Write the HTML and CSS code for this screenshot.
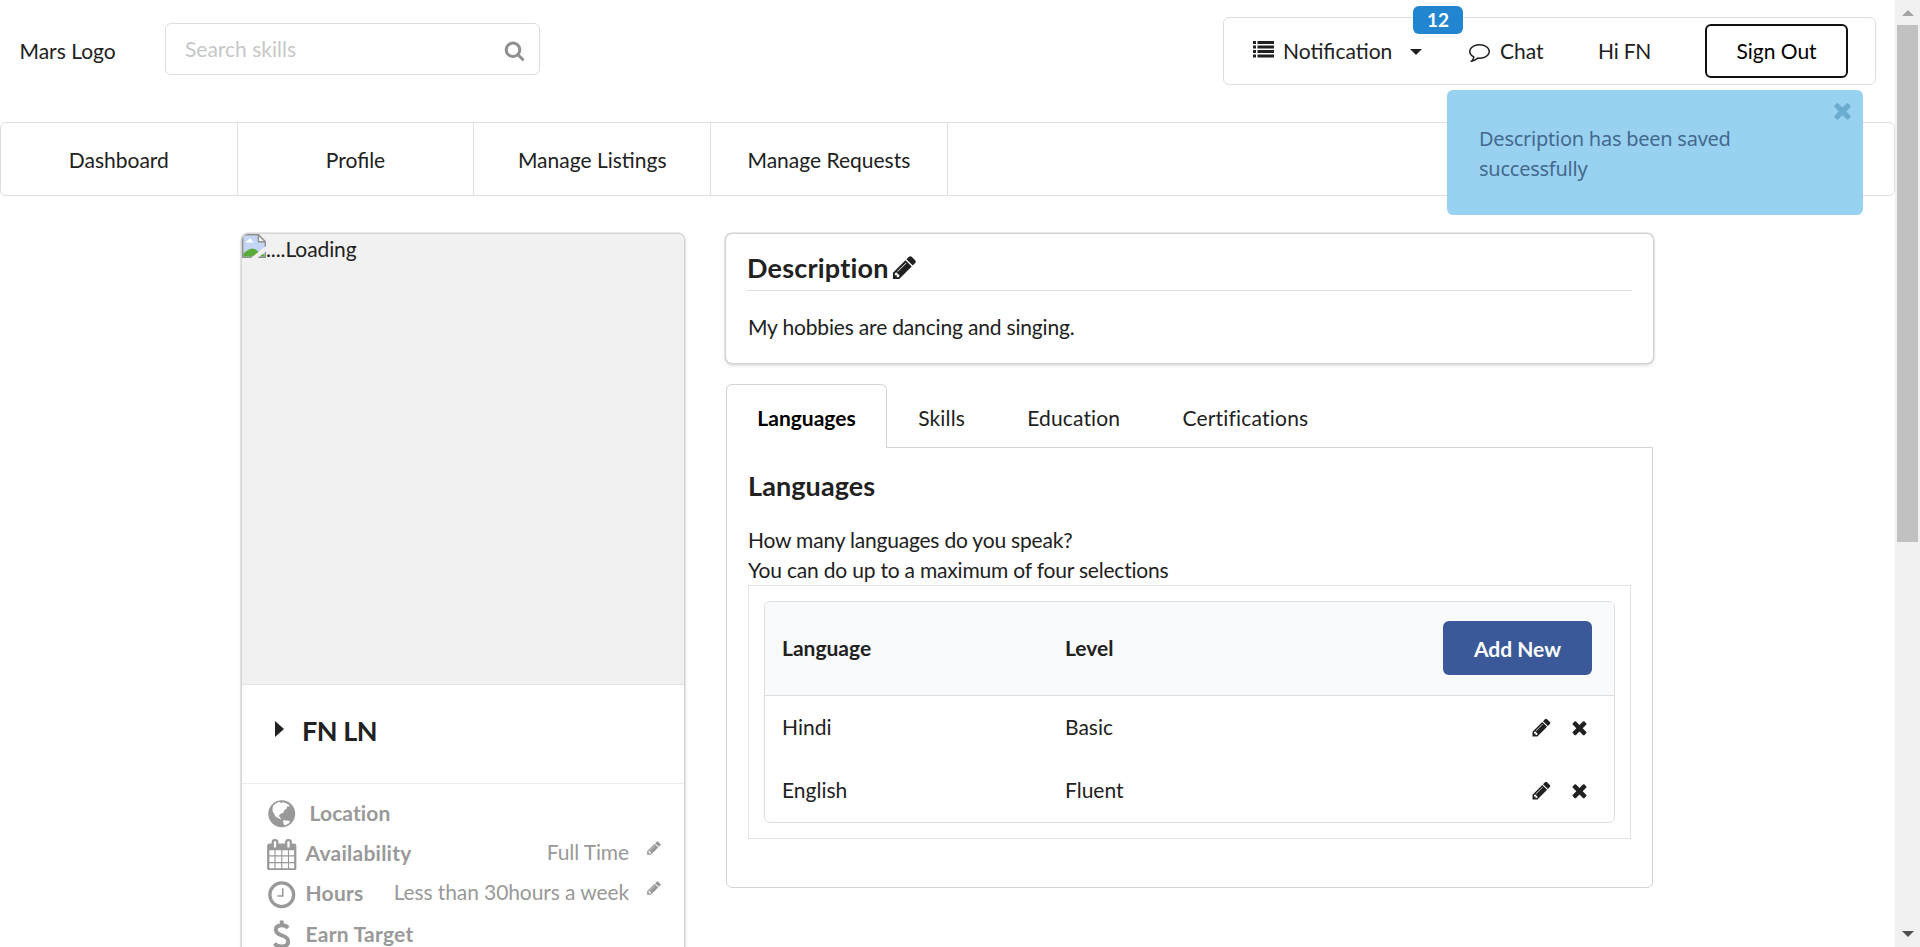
FILE: index.html
```html
<!DOCTYPE html>
<html lang="en">
<head>
<meta charset="utf-8">
<title>Profile</title>
<link rel="stylesheet" href="styles.css">
</head>
<body>
<svg class="defs" aria-hidden="true">
  <symbol id="pencil" viewBox="0 0 1792 1792"><path d="M491 1536l91-91-235-235-91 91v107h128v128h107zm523-928q0-22-22-22-10 0-17 7l-542 542q-7 7-7 17 0 22 22 22 10 0 17-7l542-542q7-7 7-17zm-54-192l416 416-832 832h-416v-416zm683 96q0 53-37 90l-166 166-416-416 166-165q36-38 90-38 53 0 91 38l235 234q37 39 37 91z"/></symbol>
  <symbol id="times" viewBox="0 0 1792 1792"><path d="M1490 1322q0 40-28 68l-136 136q-28 28-68 28t-68-28l-294-294-294 294q-28 28-68 28t-68-28l-136-136q-28-28-28-68t28-68l294-294-294-294q-28-28-28-68t28-68l136-136q28-28 68-28t68 28l294 294 294-294q28-28 68-28t68 28l136 136q28 28 28 68t-28 68l-294 294 294 294q28 28 28 68z"/></symbol>
</svg>
<div class="page">
  <header class="top">
    <div class="logo">Mars Logo</div>
    <div class="search">
      <span>Search skills</span>
      <svg class="ic21" viewBox="0 0 1792 1792"><path d="M1216 832q0-185-131.5-316.5t-316.5-131.5-316.5 131.5-131.5 316.5 131.5 316.5 316.5 131.5 316.5-131.5 131.5-316.5zm512 832q0 52-38 90t-90 38q-54 0-90-38l-343-342q-179 124-399 124-143 0-273.5-55.5t-225-150-150-225-55.5-273.5 55.5-273.5 150-225 225-150 273.5-55.5 273.5 55.5 225 150 150 225 55.5 273.5q0 220-124 399l343 343q37 37 37 90z"/></svg>
    </div>
    <div class="menu">
      <div class="notif">
        <svg class="ic21 list" viewBox="0 0 21 21"><path d="M0 1h3v3H0zM4.500 1H21v3H4.500zM0 5.500h3v3H0zM4.500 5.500H21v3H4.500zM0 10h3v3H0zM4.500 10H21v3H4.500zM0 14.500h3v3H0zM4.500 14.500H21v3H4.500z"/></svg>
        <span>Notification</span>
        <svg class="caret" viewBox="0 0 12 6"><path d="M0 0h12L6 6z"/></svg>
        <b class="badge">12</b>
      </div>
      <div class="chat">
        <svg class="ic21" viewBox="0 0 1792 1792"><path d="M896 384q-204 0-381.500 69.500t-282 187.500-104.500 255q0 112 71.500 213.500t201.500 175.500l87 50-27 96q-24 91-70 172 152-63 275-171l43-38 57 6q69 8 130 8 204 0 381.500-69.500t282-187.500 104.500-255-104.500-255-282-187.500-381.500-69.500zm896 512q0 174-120 321.500t-326 233-450 85.500q-70 0-145-8-198 175-460 242-49 14-114 22h-5q-15 0-27-10.500t-16-27.500v-1q-3-4-.5-12t2-10 4.500-9.500l6-9 7-8.500 8-9q7-8 31-34.500t34.500-38 31-39.500 32.500-51 27-59 26-76q-157-89-247.500-220t-90.500-281q0-174 120-321.500t326-233 450-85.500 450 85.500 326 233 120 321.500z"/></svg>
        <span>Chat</span>
      </div>
      <div class="hi">Hi FN</div>
      <div class="signout">Sign Out</div>
    </div>
  </header>
  <nav class="nav">
    <a>Dashboard</a><a>Profile</a><a>Manage Listings</a><a>Manage Requests</a>
  </nav>
  <main class="main">
    <aside class="card profile">
      <div class="photo">
        <svg class="broken" viewBox="0 0 24 24">
          <path d="M.7.7h15.600l7 7v15.600H.7z" fill="#c5d6f5" stroke="#909090" stroke-width="1.400"/>
          <path d="M16.300.7v7h7z" fill="#fff" stroke="#909090" stroke-width="1.400"/>
          <path d="M4 8.500q0-2 2-2 1-2.500 3-1.500 1 1 1 2 1.500 0 1.500 1.500z" fill="#fff"/>
          <path d="M1.400 22.600v-3Q6 15 10.500 14.500q3.500.5 5.500 3l6.600 3.500v1.600z" fill="#5aac3a"/>
          <path d="M9 24L24 12v5.500L15.500 24z" fill="#f1f1f1"/>
        </svg><span>....Loading</span>
      </div>
      <div class="name"><svg class="tri" viewBox="0 0 9 16"><path d="M0 0l9 8-9 8z"/></svg><b>FN LN</b></div>
      <div class="facts">
        <div class="fact loc"><svg class="ic31" viewBox="0 0 32 32"><circle cx="16" cy="16" r="13.700"/><path d="M7 8q3-3.500 7-4.300l1 1.300 3-.8 5 2.300 1 2.500-2.500-.5-.5 2.500-2.500 1.500-1 2.500-2.500 1-2 2 1.500 2 1 2.200-3.500-2.200-2-.8-2-3.700-1.500-2.500z" fill="#fff"/><path d="M17.500 22.300l2.500.5 4.500.5-1.500 2.500-4 2.200-1.500-2.500z" fill="#fff"/></svg><b>Location</b></div>
        <div class="fact"><svg class="ic31 cal" viewBox="0 0 1792 1792"><path d="M192 1664h288v-288h-288v288zm352 0h320v-288h-320v288zm-352-352h288v-320h-288v320zm352 0h320v-320h-320v320zm-352-384h288v-288h-288v288zm736 736h320v-288h-320v288zm-384-736h320v-288h-320v288zm768 736h288v-288h-288v288zm-384-352h320v-320h-320v320zm-352-864v-288q0-13-9.500-22.500t-22.500-9.500h-64q-13 0-22.500 9.500t-9.500 22.500v288q0 13 9.500 22.500t22.500 9.500h64q13 0 22.500-9.500t9.500-22.500zm736 864h288v-320h-288v320zm-384-384h320v-288h-320v288zm384 0h288v-288h-288v288zm32-480v-288q0-13-9.500-22.500t-22.500-9.500h-64q-13 0-22.500 9.500t-9.500 22.500v288q0 13 9.500 22.500t22.500 9.500h64q13 0 22.500-9.500t9.500-22.500zm384-64v1280q0 52-38 90t-90 38h-1408q-52 0-90-38t-38-90v-1280q0-52 38-90t90-38h128v-96q0-66 47-113t113-47h64q66 0 113 47t47 113v96h384v-96q0-66 47-113t113-47h64q66 0 113 47t47 113v96h128q52 0 90 38t38 90z"/></svg><b>Availability</b><span>Full Time</span><svg class="ic16"><use href="#pencil"/></svg></div>
        <div class="fact"><svg class="ic31" viewBox="0 0 32 32"><circle cx="16" cy="16" r="12.100" fill="none" stroke="#999" stroke-width="3.400"/><path d="M16.200 9.500h1.600v8.500H11.500v-1.600h4.700z"/></svg><b>Hours</b><span>Less than 30hours a week</span><svg class="ic16"><use href="#pencil"/></svg></div>
        <div class="fact"><svg class="ic31" viewBox="0 0 32 32"><path d="M16 .5v4M16 27.500v4M22.500 8Q20 5.300 16 5.300q-6 0-6 4.700 0 3.800 6 5.700 6.500 2 6.500 6.200 0 5-6.500 5-4.500 0-7.500-3" fill="none" stroke="#999" stroke-width="4"/></svg><b>Earn Target</b></div>
      </div>
    </aside>
    <section class="content">
      <div class="card desc">
        <h3>Description<svg class="ic27"><use href="#pencil"/></svg></h3>
        <p>My hobbies are dancing and singing.</p>
      </div>
      <div class="tabs"><b>Languages</b><a>Skills</a><a>Education</a><a>Certifications</a></div>
      <div class="panel">
        <h3>Languages</h3>
        <p>How many languages do you speak?<br>You can do up to a maximum of four selections</p>
        <div class="box">
          <div class="table">
            <div class="row head"><b>Language</b><b>Level</b><span class="add">Add New</span></div>
            <div class="row"><span>Hindi</span><span>Basic</span><span class="acts"><svg class="ic21"><use href="#pencil"/></svg><svg class="ic21"><use href="#times"/></svg></span></div>
            <div class="row"><span>English</span><span>Fluent</span><span class="acts"><svg class="ic21"><use href="#pencil"/></svg><svg class="ic21"><use href="#times"/></svg></span></div>
          </div>
        </div>
      </div>
    </section>
  </main>
</div>
<div class="scrollbar"><svg viewBox="0 0 12 6"><path d="M0 6h12L6 0z" fill="#a3a3a3"/></svg><i></i><svg viewBox="0 0 12 6"><path d="M0 0h12L6 6z" fill="#505050"/></svg></div>
<div class="toast"><p>Description has been saved successfully</p><svg><use href="#times"/></svg></div>
</body>
</html>
```
FILE: styles.css
```css
* { box-sizing: border-box; }
html, body { margin: 0; height: 947px; overflow: hidden; }
body {
  display: flex;
  position: relative;
  background: #fff;
  font: 21px/30px Lato, "Liberation Sans", sans-serif;
  color: #212121;
}
h3, p { margin: 0; }
h3 { font-size: 27px; line-height: 34px; font-weight: 700; }
svg { display: block; flex: none; fill: currentColor; }
.defs { position: absolute; width: 0; height: 0; }
.ic16 { width: 16px; height: 16px; }
.ic21 { width: 21px; height: 21px; }
.ic27 { width: 27px; height: 27px; }
.ic31 { width: 31.5px; height: 31.5px; }
.page { width: 1895px; height: 947px; overflow: hidden; }

.top { display: flex; height: 122px; padding-left: 19.500px; }
.logo { width: 145.500px; padding-top: 36px; }
.search {
  display: flex;
  justify-content: space-between;
  width: 375px;
  height: 52px;
  margin-top: 23px;
  padding: 10px 14px 0 19px;
  border: 1px solid #dededf;
  border-radius: 6px;
  color: #c7c7c7;
}
.search svg { margin-top: 6px; color: #909090; }
.menu {
  display: flex;
  width: 653px;
  height: 68px;
  margin: 17px 0 0 683px;
  border: 1px solid #dededf;
  border-radius: 6px;
}
.notif { position: relative; display: flex; width: 216px; padding: 18px 0 0 29px; }
.notif span { width: 136px; padding-left: 9px; }
.list { margin-top: 4px; }
.caret { width: 12px; height: 6px; margin-top: 13px; }
.badge {
  position: absolute;
  left: 189px;
  top: -12px;
  width: 50px;
  height: 28px;
  border-radius: 6px;
  background: #2185d0;
  color: #fff;
  font-size: 19px;
  line-height: 28px;
  text-align: center;
}
.chat { display: flex; gap: 10px; width: 158px; padding: 18px 0 0 29px; }
.chat svg { margin-top: 5px; }
.hi { width: 107px; padding-top: 18px; letter-spacing: -.2px; }
.signout {
  width: 143px;
  height: 54px;
  margin-top: 6px;
  border: 2px solid #111;
  border-radius: 6px;
  line-height: 49px;
  text-align: center;
  color: #000;
}

.nav {
  display: flex;
  height: 74px;
  border: 1px solid #dededf;
  border-radius: 6px;
}
.nav a {
  width: 236.700px;
  border-right: 1px solid #e0e0e1;
  line-height: 73px;
  text-align: center;
}

.main { display: flex; gap: 42px; padding: 38px 0 0 242px; }
.card {
  border-radius: 6px;
  box-shadow: 0 0 0 1.500px #d4d4d5, 0 1.500px 4px #d4d4d5;
}
.profile { width: 442px; height: 760px; overflow: hidden; font-variant-ligatures: none; }
.photo { display: flex; height: 450px; background: #f1f1f1; letter-spacing: -.1px; }
.broken { width: 24px; height: 24px; }
.name {
  display: flex;
  height: 100px;
  padding: 29px 0 0 33px;
  border-top: 1px solid #e2e2e2;
  border-bottom: 1px solid #ececec;
}
.name b { padding-left: 18px; font-size: 27px; line-height: 34px; letter-spacing: -.5px; }
.tri { width: 9px; height: 16px; margin-top: 7px; }
.facts { padding: 9px 22px 0 24px; color: #999; }
.fact { display: flex; height: 40.500px; padding-top: 5px; }
.fact b { margin-top: -1px; padding-left: 8px; letter-spacing: .25px; }
.loc b { margin-top: 0; padding-left: 12px; letter-spacing: .1px; }
.fact span { margin: -2px 17px 0 auto; letter-spacing: -.1px; }
.ic16 { margin-top: 1px; }

.content { width: 927px; }
.desc { height: 129px; padding: 17px 21px 0; font-variant-ligatures: none; }
.desc h3 { display: flex; height: 40px; gap: 2px; border-bottom: 1px solid #dededf; letter-spacing: .2px; }
.desc h3 svg { margin-top: 3px; }
.desc p { padding: 21px 0 0 1px; letter-spacing: -.17px; }
.tabs { display: flex; height: 64px; margin-top: 21px; margin-bottom: -1px; font-variant-ligatures: none; }
.tabs b {
  position: relative;
  width: 161px;
  border: 1px solid #d4d4d5;
  border-bottom: 0;
  border-radius: 6px 6px 0 0;
  background: #fff;
  line-height: 66px;
  text-align: center;
  color: #000;
}
.tabs a { padding-left: 31.200px; padding-right: 31px; line-height: 68px; letter-spacing: .15px; }
.tabs a:last-child { letter-spacing: .2px; }
.panel {
  height: 441px;
  padding: 21px;
  border: 1px solid #d4d4d5;
  border-radius: 0 0 6px 6px;
}
.panel > h3 { letter-spacing: .1px; }
.panel > p { padding-top: 22px; letter-spacing: -.2px; }
.box { height: 254px; padding: 15px; border: 1px solid #e2e2e3; }
.table { border: 1px solid #dededf; border-radius: 6px; overflow: hidden; height: 222px; }
.row { display: grid; grid-template-columns: 283px 283px 1fr; height: 63px; padding: 16px 22px 0 17px; }
.head { height: 94px; padding-top: 19px; border-bottom: 1px solid #dededf; background: #f9fafb; line-height: 54px; }
.add {
  justify-self: end;
  width: 149px;
  height: 54px;
  border-radius: 6px;
  background: #3b5998;
  color: #fff;
  font-weight: 700;
  line-height: 56px;
  text-align: center;
}
.acts { display: flex; justify-content: end; gap: 17px; padding: 5px 2px 0 0; }

.scrollbar {
  display: flex;
  flex-direction: column;
  align-items: center;
  width: 25px;
  height: 947px;
  padding: 10px 0;
  background: #f1f1f1;
}
.scrollbar svg { width: 12px; height: 6px; }
.scrollbar i { width: 21px; height: 517px; margin: 9px 0 auto; background: #c1c1c1; }
.toast {
  position: absolute;
  left: 1447px;
  top: 89.500px;
  display: flex;
  justify-content: space-between;
  width: 416px;
  height: 125.500px;
  padding: 34px 8px 0 32px;
  border-radius: 6px;
  background: #99d2f0;
  color: #44698f;
  font-family: "Noto Sans", "Open Sans", sans-serif;
  font-size: 20px;
  letter-spacing: -.25px;
}
.toast p { width: 280px; }
.toast svg { width: 25px; height: 25px; margin-top: -26px; color: #6badcf; }
```
